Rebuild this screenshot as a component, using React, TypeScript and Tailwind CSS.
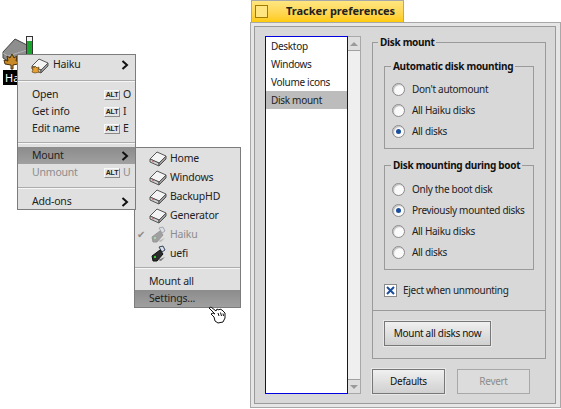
import type { ReactNode } from 'react';

const font = "font-['Noto_Sans',sans-serif]";

function DiskIcon({ leaf }: { leaf?: boolean }) {
  return (
    <svg width="18" height="17" viewBox="0 0 18 17">
      <path d="M1 9 L8 2 L17 6 L10 13 Z" fill="#f4f4f4" stroke="#555" strokeWidth="1" />
      <path d="M1 9 L10 13 V16 L1 12 Z" fill="#d0d0d0" stroke="#555" strokeWidth="1" />
      <path d="M10 13 L17 6 V9 L10 16 Z" fill="#9c9c9c" stroke="#555" strokeWidth="1" />
      <path d="M3 11 L5 12" stroke={leaf ? '#6a4' : '#c66'} strokeWidth="1" />
      {leaf && (
        <path d="M4 9 L6 11 L8 10 L7 13 L8 15 L4 16 L1 15 L2 13 L1 10 L3 11 Z" fill="#e8a030" stroke="#6a4810" strokeWidth="0.7" />
      )}
    </svg>
  );
}

function UsbIcon({ dim }: { dim?: boolean }) {
  return (
    <svg width="18" height="18" viewBox="0 0 18 18" className={dim ? 'opacity-35' : ''}>
      <path d="M10 2 L14 1 L16 5 L13 7 Z" fill="#d8dce8" stroke="#345" strokeWidth="1" />
      <path d="M3 11 L11 5 L14 9 L8 16 L4 16 Z" fill="#2c2c2c" stroke="#111" strokeWidth="1" />
      <path d="M9 15 L16 12 L12 16 Z" fill="#777" />
      <rect x="5" y="11" width="2" height="2" fill="#3c3" />
    </svg>
  );
}

function Shortcut({ letter, dim }: { letter: string; dim?: boolean }) {
  return (
    <div className="flex items-center w-[31px] shrink-0">
      <span className="flex items-center justify-center w-[16px] h-[10px] bg-[#e4e4e4] border border-t-[#f8f8f8] border-l-[#f8f8f8] border-r-[#8a8a8a] border-b-[#8a8a8a] text-[7px] leading-none font-bold text-[#222] font-['Liberation_Sans',sans-serif]">
        ALT
      </span>
      <span className={`ml-[3px] ${dim ? 'text-[#8c8c8c]' : 'text-[#222]'}`}>{letter}</span>
    </div>
  );
}

function Arrow() {
  return (
    <svg width="8" height="10" viewBox="0 0 8 10" className="shrink-0">
      <path d="M1.5 1 L6 5 L1.5 9" fill="none" stroke="#111" strokeWidth="2" />
    </svg>
  );
}

function MenuRow({ h, children, active }: { h: number; children: ReactNode; active?: boolean }) {
  return (
    <div
      style={{ height: h }}
      className={`flex items-center ${active ? 'bg-gradient-to-b from-[#8c8c8c] to-[#a0a0a0]' : ''}`}
    >
      {children}
    </div>
  );
}

function Sep({ className }: { className: string }) {
  return <div className={`border-t border-[#acacac] border-b-white/70 border-b ${className}`} />;
}

function ContextMenu() {
  return (
    <div className="absolute left-[17px] top-[54px] w-[119px] h-[156px] bg-[#e0e0e0] border border-[#7c7c7c] text-[10.5px] tracking-[-0.2px] text-[#222]">
      <MenuRow h={20}>
        <div className="ml-[13px] mr-[2px]">
          <DiskIcon leaf />
        </div>
        <span className="ml-[2px] flex-1">Haiku</span>
        <div className="mr-[6px]">
          <Arrow />
        </div>
      </MenuRow>
      <Sep className="mt-[5px] mb-[4px]" />
      {[
        ['Open', 'O'],
        ['Get info', 'I'],
        ['Edit name', 'E'],
      ].map(([label, key]) => (
        <MenuRow key={label} h={17}>
          <span className="ml-[14px] flex-1">{label}</span>
          <Shortcut letter={key} />
        </MenuRow>
      ))}
      <Sep className="mt-[5px] mb-[3px]" />
      <MenuRow h={17} active>
        <span className="ml-[14px] flex-1">Mount</span>
        <div className="mr-[6px]">
          <Arrow />
        </div>
      </MenuRow>
      <MenuRow h={17}>
        <span className="ml-[14px] flex-1 text-[#8c8c8c]">Unmount</span>
        <Shortcut letter="U" dim />
      </MenuRow>
      <Sep className="mt-[6px] mb-[4px]" />
      <MenuRow h={17}>
        <span className="ml-[14px] flex-1">Add-ons</span>
        <div className="mr-[6px]">
          <Arrow />
        </div>
      </MenuRow>
    </div>
  );
}

function MountMenu() {
  const disks = ['Home', 'Windows', 'BackupHD', 'Generator'];
  return (
    <div className="absolute left-[134px] top-[147px] w-[107px] h-[161px] bg-[#e0e0e0] border border-[#7c7c7c] text-[10.5px] tracking-[-0.2px] text-[#222]">
      <div className="pt-[1px]">
        {disks.map((d) => (
          <MenuRow key={d} h={19}>
            <div className="ml-[14px] mr-[3px]">
              <DiskIcon />
            </div>
            {d}
          </MenuRow>
        ))}
        <MenuRow h={19}>
          <span className="ml-[2px] w-[12px] text-[10px] text-[#8c8c8c]">✔</span>
          <div className="mr-[3px]">
            <UsbIcon dim />
          </div>
          <span className="text-[#8c8c8c]">Haiku</span>
        </MenuRow>
        <MenuRow h={19}>
          <div className="ml-[14px] mr-[3px]">
            <UsbIcon />
          </div>
          uefi
        </MenuRow>
      </div>
      <Sep className="mt-[4px] mb-[4px]" />
      <MenuRow h={17}>
        <span className="ml-[14px]">Mount all</span>
      </MenuRow>
      <MenuRow h={17} active>
        <span className="ml-[14px]">Settings...</span>
      </MenuRow>
    </div>
  );
}

function DesktopIcon() {
  return (
    <div className="absolute left-[2px] top-[36px] w-[32px]">
      <svg width="32" height="34" viewBox="0 0 32 34">
        <path d="M1 16 L13 3 L25 9 L25 26 L8 26 L1 22 Z" fill="#8e8e8e" stroke="#444" strokeWidth="1" />
        <path d="M1 17 L6 20 L25 14" fill="none" stroke="#b4b4b4" strokeWidth="1" />
        <rect x="24.5" y="0.5" width="6" height="24" fill="#f4f4f4" stroke="#333" />
        <rect x="25" y="5" width="5" height="19" fill="#1aa52e" />
        <path
          d="M10 18 L12 22 L15 20 L14 25 L18 24 L16 28 L11 29 L11 33 L9 33 L9 29 L3 28 L2 24 L6 25 L5 20 L8 22 Z"
          fill="#c88a28"
          stroke="#4a3008"
          strokeWidth="1"
        />
      </svg>
      <div className="w-fit h-[15px] ml-[1px] bg-black text-white text-[11px] leading-[15px] px-[2px]">Haiku</div>
    </div>
  );
}

function HandCursor() {
  return (
    <svg className="absolute left-[208px] top-[305px]" width="19" height="19" viewBox="0 0 19 19">
      <path
        d="M1 3 L3 2 L8 6 L9 4 L11 5 L12 4 L14 5 L15 6 L17 8 L17 13 L15 17 L10 18 L7 16 L6 12 L3 9 L5 8 L7 9 Z"
        fill="#fff"
        stroke="#111"
        strokeWidth="1"
      />
      <path d="M10 8 L11 11 M12.5 7.5 L13.5 11 M15 8.5 L15.5 11" stroke="#111" strokeWidth="1" fill="none" />
    </svg>
  );
}

function Radio({ label, on }: { label: string; on?: boolean }) {
  return (
    <div className="flex items-center h-[21px]">
      <span className="flex items-center justify-center w-[13px] h-[13px] rounded-full border border-[#8a8a8a] bg-[#fafafa] shadow-[inset_1px_1px_1px_#bbb] shrink-0">
        {on && <span className="w-[5px] h-[5px] rounded-full bg-[#1b4f9c]" />}
      </span>
      <span className="ml-[7px] whitespace-nowrap">{label}</span>
    </div>
  );
}

function Group({
  title,
  className,
  titleClass,
  children,
}: {
  title: string;
  className: string;
  titleClass: string;
  children: ReactNode;
}) {
  return (
    <div className={`relative border border-[#9a9a9a] ${className}`}>
      <span className={`absolute top-[-8px] leading-[14px] px-[2px] bg-[#d8d8d8] font-bold text-[#111] whitespace-nowrap ${titleClass}`}>
        {title}
      </span>
      {children}
    </div>
  );
}

function Button({ children, className, disabled }: { children: ReactNode; className: string; disabled?: boolean }) {
  return (
    <button
      className={`flex items-center justify-center border ${
        disabled
          ? 'border-[#a8a8a8] text-[#8c8c8c] bg-[#dcdcdc]'
          : 'border-[#777] text-[#111] bg-gradient-to-b from-[#f0f0f0] to-[#d0d0d0] outline outline-1 outline-[#e8e8e8]'
      } ${className}`}
    >
      {children}
    </button>
  );
}

function ScrollArrow({ up }: { up?: boolean }) {
  return (
    <div
      className={`h-[14px] bg-[#dedede] border-[#a0a0a0] flex items-center justify-center ${
        up ? 'border-b' : 'border-t'
      }`}
    >
      <svg width="8" height="6" viewBox="0 0 8 6">
        <path d={up ? 'M0 5 L4 1 L8 5 Z' : 'M0 1 L4 5 L8 1 Z'} fill="#9a9a9a" />
      </svg>
    </div>
  );
}

function PrefsWindow() {
  const items = ['Desktop', 'Windows', 'Volume icons', 'Disk mount'];
  return (
    <div className="w-[311px] h-[409px] flex flex-col text-[10px] tracking-[-0.3px] text-[#222]">
      <div className="ml-[1px] w-[153px] h-[22px] flex items-center bg-gradient-to-b from-[#ffe680] to-[#ffcb00] border-t border-l border-r border-[#a8a8a8]">
        <span className="ml-[3px] w-[13px] h-[13px] bg-[#ffe680] border border-[#a07c00]" />
        <span className="ml-[18px] font-bold text-[11px] tracking-normal text-[#222]">Tracker preferences</span>
      </div>
      <div className="flex-1 mb-[1px] border border-[#a8a8a8] bg-[#e6e6e6] p-[3px] pr-[4px]">
        <div className="h-full border border-[#9a9a9a] bg-[#d8d8d8] flex">
          <div className="ml-[10px] mt-[9px] w-[96px] h-[358px] flex shrink-0">
            <div className="w-[83px] h-full border border-[#0000e0] bg-white">
              {items.map((item) => (
                <div
                  key={item}
                  className={`h-[18px] leading-[18px] pl-[5px] ${item === 'Disk mount' ? 'bg-[#bcbcbc]' : ''}`}
                >
                  {item}
                </div>
              ))}
            </div>
            <div className="flex-1 border border-l-0 border-[#a8a8a8] bg-[#efefef] flex flex-col justify-between">
              <ScrollArrow up />
              <ScrollArrow />
            </div>
          </div>
          <div className="ml-[11px] flex flex-col">
            <Group title="Disk mount" titleClass="left-[5px]" className="mt-[15px] w-[174px] h-[317px]">
              <Group
                title="Automatic disk mounting"
                titleClass="left-[6px]"
                className="ml-[11px] mt-[23px] w-[150px] h-[83px] pl-[7px] pt-[12px]"
              >
                <Radio label="Don't automount" />
                <Radio label="All Haiku disks" />
                <Radio label="All disks" on />
              </Group>
              <Group
                title="Disk mounting during boot"
                titleClass="left-[6px]"
                className="ml-[11px] mt-[16px] w-[150px] h-[105px] pl-[7px] pt-[13px]"
              >
                <Radio label="Only the boot disk" />
                <Radio label="Previously mounted disks" on />
                <Radio label="All Haiku disks" />
                <Radio label="All disks" />
              </Group>
              <div className="flex items-center ml-[11px] mt-[14px] h-[13px]">
                <span className="w-[13px] h-[13px] border border-[#8a8a8a] bg-white flex items-center justify-center">
                  <svg width="9" height="9" viewBox="0 0 9 9">
                    <path d="M1 1 L8 8 M8 1 L1 8" stroke="#1b4f9c" strokeWidth="2" />
                  </svg>
                </span>
                <span className="ml-[6px]">Eject when unmounting</span>
              </div>
              <div className="mt-[13px] border-t border-[#9a9a9a]" />
              <Button className="ml-[11px] mt-[10px] w-[107px] h-[25px]">Mount all disks now</Button>
            </Group>
            <div className="flex mt-[10px]">
              <Button className="w-[73px] h-[25px]">Defaults</Button>
              <Button disabled className="ml-[12px] w-[73px] h-[25px]">
                Revert
              </Button>
            </div>
          </div>
        </div>
      </div>
    </div>
  );
}

export default function App() {
  return (
    <div className={`relative flex w-[561px] h-[409px] overflow-hidden bg-white ${font}`}>
      <div className="w-[250px] shrink-0">
        <DesktopIcon />
        <MountMenu />
        <ContextMenu />
        <HandCursor />
      </div>
      <PrefsWindow />
    </div>
  );
}
